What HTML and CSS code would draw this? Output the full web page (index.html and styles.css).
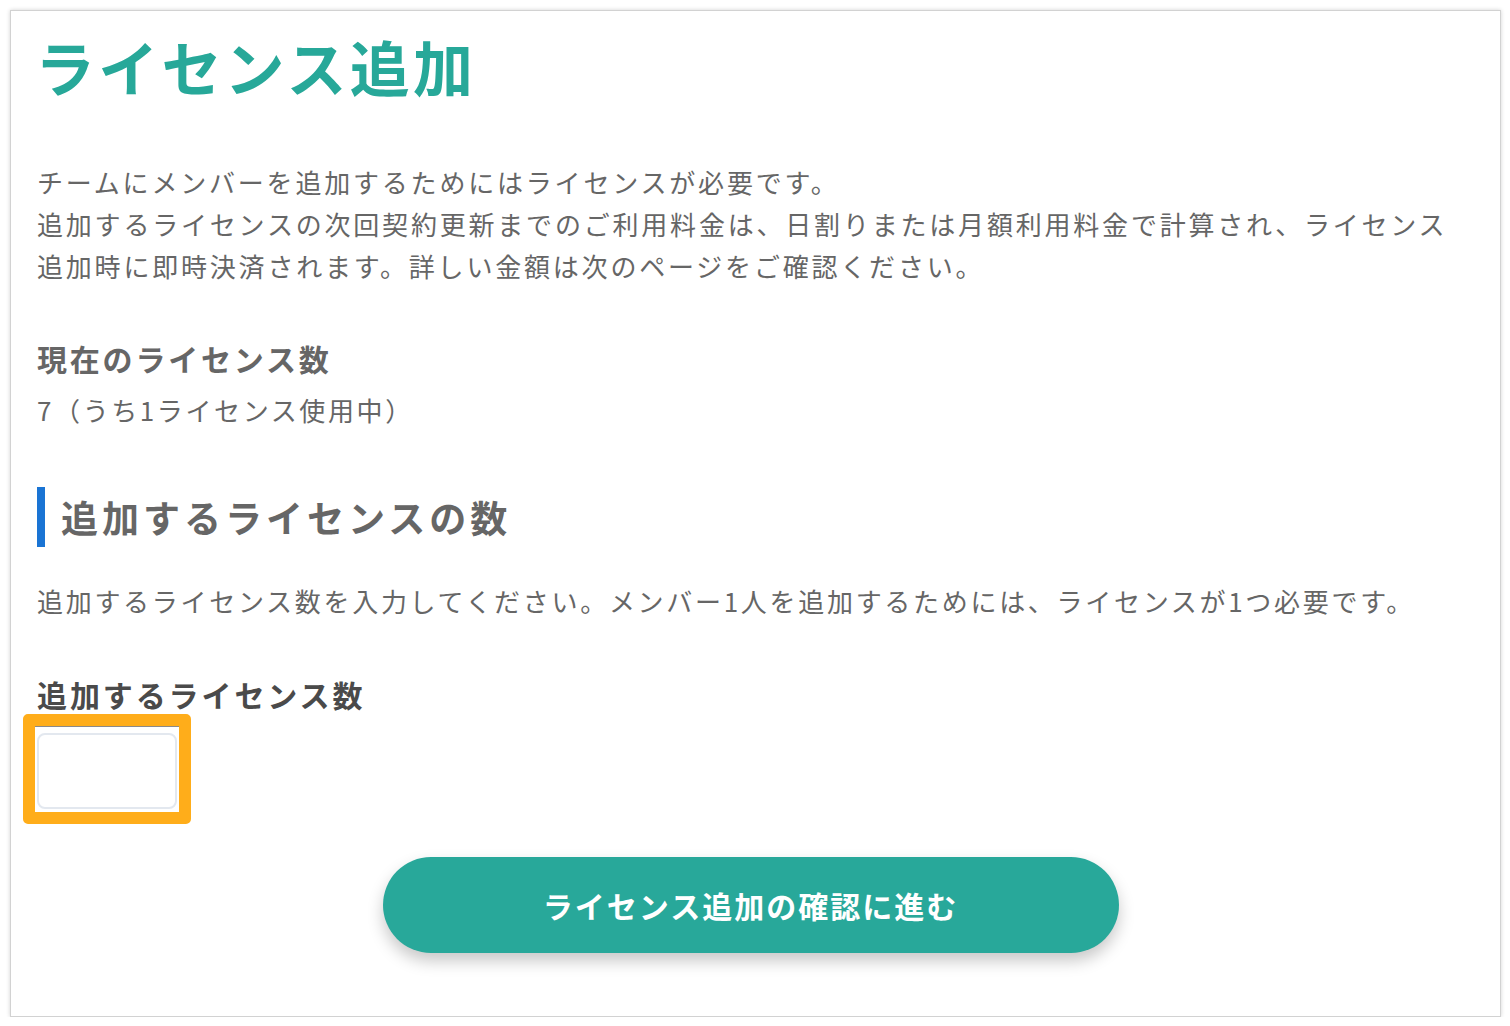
FILE: index.html
```html
<!DOCTYPE html>
<html lang="ja">
<head>
<meta charset="utf-8">
<title>ライセンス追加</title>
<link rel="stylesheet" href="styles.css">
</head>
<body>
<div class="card">
  <h1 class="title">ライセンス追加</h1>
  <p class="lead">チームにメンバーを追加するためにはライセンスが必要です。<br>追加するライセンスの次回契約更新までのご利用料金は、日割りまたは月額利用料金で計算され、ライセンス<br>追加時に即時決済されます。詳しい金額は次のページをご確認ください。</p>
  <h3 class="sub">現在のライセンス数</h3>
  <p class="value">7（うち1ライセンス使用中）</p>
  <h2 class="section">追加するライセンスの数</h2>
  <p class="desc">追加するライセンス数を入力してください。メンバー1人を追加するためには、ライセンスが1つ必要です。</p>
  <label class="label" for="count">追加するライセンス数</label>
  <div class="highlight">
    <input class="count-input" id="count" type="text">
  </div>
  <div class="actions">
    <button class="btn" type="button">ライセンス追加の確認に進む</button>
  </div>
</div>
</body>
</html>
```
FILE: styles.css
```css
* { box-sizing: border-box; }
html, body { margin: 0; padding: 0; background: #ffffff; }
body {
  font-family: "Noto Sans CJK JP", "Noto Sans", sans-serif;
  color: #666666;
}
.card {
  margin: 10px 0 0 10px;
  width: 1491px;
  height: 1007px;
  background: #ffffff;
  border: 1px solid #d2d2d2;
  box-shadow: 0 0 4px rgba(0,0,0,0.18);
  padding: 15px 26px 0 26px;
  display: flex;
  flex-direction: column;
  align-items: flex-start;
}
.title {
  margin: 0 0 0 -2px;
  font-size: 60px;
  line-height: 80px;
  font-weight: 700;
  color: #27a899;
  letter-spacing: 3.2px;
}
.lead {
  margin: 55px 0 0 0;
  font-size: 26px;
  line-height: 42px;
  letter-spacing: 2.8px;
  color: #666666;
}
.sub {
  margin: 49px 0 0 0;
  font-size: 30px;
  line-height: 44px;
  font-weight: 700;
  letter-spacing: 2.8px;
  color: #666666;
}
.value {
  margin: 9px 0 0 0;
  font-size: 26px;
  line-height: 42px;
  letter-spacing: 2.6px;
  color: #666666;
}
.section {
  margin: 56px 0 0 0;
  border-left: 8px solid #1a74d4;
  padding-left: 16px;
  font-size: 37px;
  line-height: 60px;
  font-weight: 700;
  letter-spacing: 4px;
  color: #666666;
}
.desc {
  margin: 33px 0 0 0;
  font-size: 26px;
  line-height: 42px;
  letter-spacing: 2.7px;
  color: #666666;
}
.label {
  margin: 53px 0 0 0;
  font-size: 30px;
  line-height: 38px;
  font-weight: 700;
  letter-spacing: 2.9px;
  color: #4a4a4a;
}
.highlight {
  margin: 1px 0 0 -14px;
  border: 12px solid #ffad1a;
  border-radius: 5px;
  width: 168px;
  height: 110px;
  background: #ffffff;
  box-shadow: inset 0 1px 0 #8a8a8a;
  padding: 7px 0 0 2px;
}
.count-input {
  display: block;
  width: 140px;
  height: 76px;
  border: 2px solid #e3e8ef;
  border-radius: 8px;
  background: #ffffff;
  outline: none;
  font-size: 24px;
}
.actions {
  align-self: stretch;
  display: flex;
  justify-content: center;
  margin-top: 33px;
  padding-right: 10px;
}
.btn {
  width: 736px;
  height: 96px;
  border: none;
  border-radius: 48px;
  background: #28a89a;
  color: #ffffff;
  font-family: "Noto Sans CJK JP", "Noto Sans", sans-serif;
  font-size: 30px;
  font-weight: 700;
  letter-spacing: 2px;
  box-shadow: 0 8px 16px rgba(0,0,0,0.22);
  cursor: pointer;
}
```
